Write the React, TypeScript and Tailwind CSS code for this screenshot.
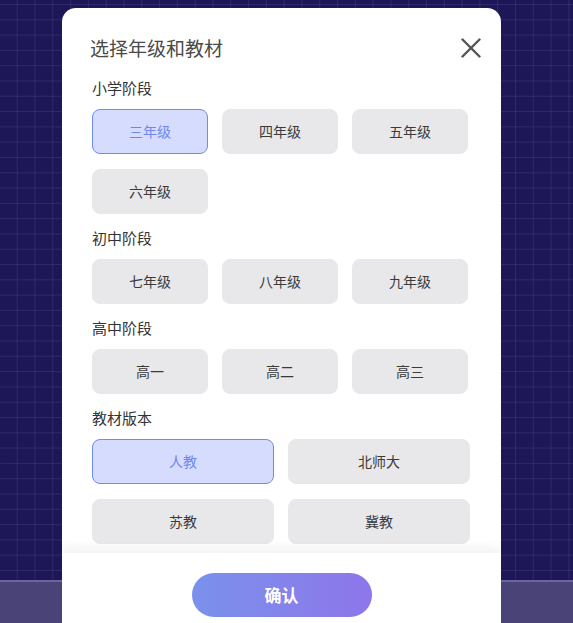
import { useState } from 'react';

const stages = [
  { title: '小学阶段', items: ['三年级', '四年级', '五年级', '六年级'] },
  { title: '初中阶段', items: ['七年级', '八年级', '九年级'] },
  { title: '高中阶段', items: ['高一', '高二', '高三'] },
];

const books = ['人教', '北师大', '苏教', '冀教'];

function Option({ label, active, onClick }: { label: string; active: boolean; onClick: () => void }) {
  return (
    <button
      onClick={onClick}
      className={`h-[45px] rounded-[8px] text-[14px] flex items-center justify-center border ${
        active ? 'bg-[#d5dcfe] border-[#6e8bf1] text-[#6f86ee]' : 'bg-[#e8e8ea] border-[#e8e8ea] text-[#3a3a3a]'
      }`}
    >
      {label}
    </button>
  );
}

export default function App() {
  const [grade, setGrade] = useState('三年级');
  const [book, setBook] = useState('人教');

  return (
    <div className="relative w-full h-[623px] overflow-hidden flex flex-col font-['Noto_Sans_CJK_SC','Noto_Sans',sans-serif]">
      <div className="flex-1 bg-[#1d1758] bg-[linear-gradient(rgba(140,130,200,0.16)_1px,transparent_1px),linear-gradient(90deg,rgba(140,130,200,0.16)_1px,transparent_1px)] bg-[size:17.8px_15.3px] bg-[position:16.7px_4px]" />
      <div className="h-[43px] bg-[#4a4377] border-t-2 border-[#6b6599]" />

      {/* dialog */}
      <div className="absolute left-[62px] top-[8px] w-[439px] h-[630px] bg-white rounded-[14px] flex flex-col overflow-hidden">
        <div className="flex items-center justify-between pl-[28px] pr-[20px] pt-[27px] pb-[17px]">
          <div className="text-[19px] leading-[26px] text-[#4a4a4a]">选择年级和教材</div>
          <button className="w-[20px] h-[20px] text-[#555]">
            <svg width="20" height="20" viewBox="0 0 20 20" fill="none" stroke="currentColor" strokeWidth="2.4" strokeLinecap="round">
              <line x1="1.5" y1="1.5" x2="18.5" y2="18.5" />
              <line x1="18.5" y1="1.5" x2="1.5" y2="18.5" />
            </svg>
          </button>
        </div>

        <div className="flex-1 overflow-hidden px-[30px]">
          {stages.map((s) => (
            <div key={s.title} className="mb-[14px]">
              <div className="text-[15px] leading-[20px] text-[#333] mb-[11px]">{s.title}</div>
              <div className="grid grid-cols-[repeat(3,116px)] gap-x-[14px] gap-y-[15px]">
                {s.items.map((g) => (
                  <Option key={g} label={g} active={grade === g} onClick={() => setGrade(g)} />
                ))}
              </div>
            </div>
          ))}
          <div>
            <div className="text-[15px] leading-[20px] text-[#333] mb-[11px]">教材版本</div>
            <div className="grid grid-cols-[repeat(2,182px)] gap-x-[14px] gap-y-[15px]">
              {books.map((b) => (
                <Option key={b} label={b} active={book === b} onClick={() => setBook(b)} />
              ))}
            </div>
          </div>
        </div>

        <div className="h-[85px] pt-[20px] flex justify-center bg-white shadow-[0_-6px_10px_rgba(0,0,0,0.05)]">
          <button className="w-[180px] h-[44px] rounded-full bg-[linear-gradient(90deg,#7a91ec,#8e76ea)] text-white text-[17px] font-bold">
            确认
          </button>
        </div>
      </div>
    </div>
  );
}
